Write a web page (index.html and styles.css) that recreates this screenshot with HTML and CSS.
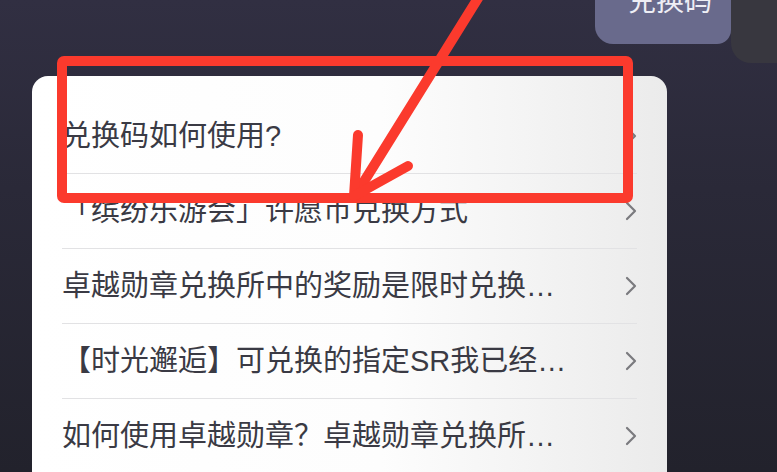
FILE: index.html
```html
<!DOCTYPE html>
<html lang="zh-CN">
<head>
<meta charset="utf-8">
<title>兑换码</title>
<link rel="stylesheet" href="styles.css">
</head>
<body>
<div class="screen">
  <div class="chat-head">
    <div class="bubble"><span class="bubble-text">兑换码</span></div>
    <div class="avatar"></div>
  </div>
  <div class="card">
    <div class="row"><span class="row-text">兑换码如何使用?</span><svg class="chev" viewBox="0 0 12 20" width="12" height="20"><polyline points="2,2 10,10 2,18"/></svg></div>
    <div class="row"><span class="row-text">「缤纷乐游会」许愿币兑换方式</span><svg class="chev" viewBox="0 0 12 20" width="12" height="20"><polyline points="2,2 10,10 2,18"/></svg></div>
    <div class="row"><span class="row-text">卓越勋章兑换所中的奖励是限时兑换…</span><svg class="chev" viewBox="0 0 12 20" width="12" height="20"><polyline points="2,2 10,10 2,18"/></svg></div>
    <div class="row"><span class="row-text">【时光邂逅】可兑换的指定SR我已经…</span><svg class="chev" viewBox="0 0 12 20" width="12" height="20"><polyline points="2,2 10,10 2,18"/></svg></div>
    <div class="row"><span class="row-text">如何使用卓越勋章？卓越勋章兑换所…</span><svg class="chev" viewBox="0 0 12 20" width="12" height="20"><polyline points="2,2 10,10 2,18"/></svg></div>
  </div>
  <svg class="annotation" viewBox="0 0 777 472" width="777" height="472">
    <rect x="62" y="61" width="566" height="137" rx="2"/>
    <line x1="480" y1="-5" x2="355" y2="196"/>
    <line x1="358" y1="135" x2="354" y2="196"/>
    <line x1="408" y1="166" x2="354" y2="196"/>
  </svg>
</div>
</body>
</html>
```
FILE: styles.css
```css
html, body {
  margin: 0;
  padding: 0;
}
body {
  background: #262532;
  overflow: hidden;
}
.screen {
  position: relative;
  width: 777px;
  height: 472px;
  overflow: hidden;
  background: linear-gradient(180deg, #312f42 0%, #2a2938 40%, #22222c 100%);
  font-family: "Liberation Sans", "Noto Sans CJK SC", sans-serif;
}
.chat-head {
  display: flex;
  justify-content: flex-end;
  align-items: flex-start;
  height: 76px;
}
.bubble {
  width: 136px;
  height: 44px;
  box-sizing: border-box;
  padding-left: 33px;
  background: #696a8c;
  border-radius: 0 0 14px 18px;
  overflow: hidden;
  color: #eeeef5;
  font-size: 28px;
  line-height: 28px;
  font-family: "Noto Sans CJK SC", sans-serif;
}
.bubble-text {
  display: block;
  margin-top: -15px;
}
.avatar {
  width: 46px;
  height: 63px;
  background: #38373f;
  border-radius: 0 0 0 20px;
}
.card {
  margin-left: 32px;
  width: 635px;
  height: 420px;
  box-sizing: border-box;
  padding: 23px 30px 0;
  border-radius: 16px 16px 0 0;
  background: linear-gradient(90deg, #ffffff 0%, #fdfdfd 55%, #ebebeb 100%);
}
.row {
  display: flex;
  align-items: center;
  justify-content: space-between;
  height: 74px;
  border-bottom: 1px solid #e2e2e4;
}
.row:last-child {
  border-bottom: none;
}
.row-text {
  font-size: 29px;
  line-height: 36px;
  color: #3a3a44;
  white-space: nowrap;
}
.chev {
  flex: none;
  fill: none;
  stroke: #7a7a7e;
  stroke-width: 2.2;
  stroke-linecap: round;
  stroke-linejoin: round;
}
.annotation {
  position: absolute;
  left: 0;
  top: 0;
  pointer-events: none;
  fill: none;
  stroke: #fb3a2d;
  stroke-width: 10;
  stroke-linecap: round;
  stroke-linejoin: round;
}
```
